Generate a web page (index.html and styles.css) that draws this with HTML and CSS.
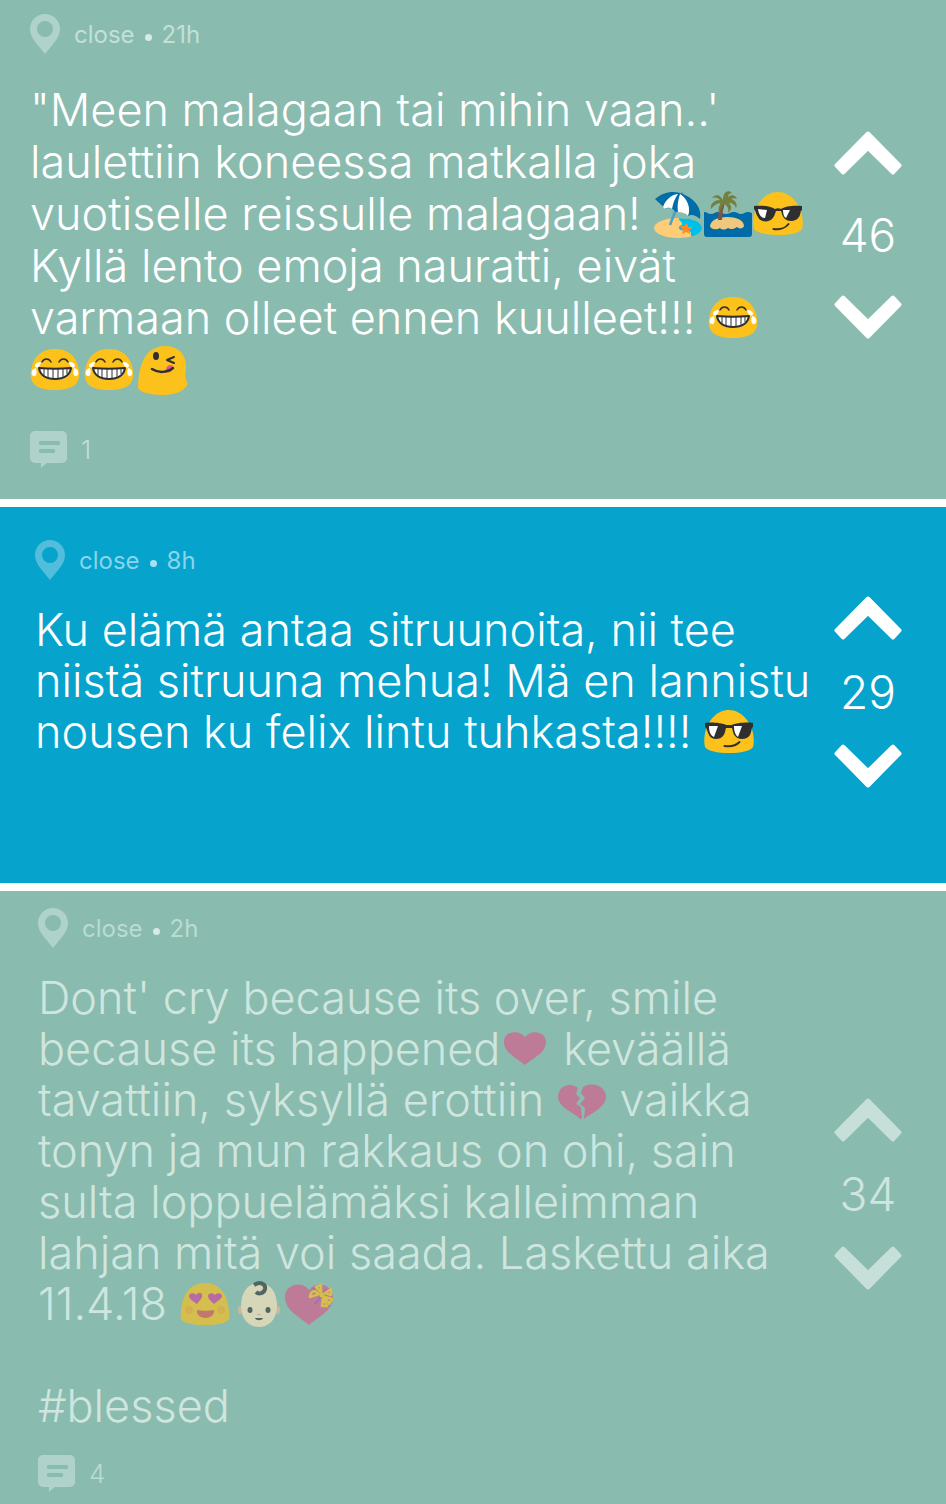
FILE: index.html
```html
<!DOCTYPE html>
<html lang="fi">
<head>
<meta charset="utf-8">
<meta name="viewport" content="width=device-width, initial-scale=1">
<title>Posts</title>
<link rel="stylesheet" href="styles.css">
</head>
<body>
<svg class="sprite" aria-hidden="true">
  <symbol id="pin" viewBox="0 0 30 40"><path fill-rule="evenodd" d="M15 0C6.700 0 0 6.700 0 15c0 9 8 16 15 25 7-9 15-16 15-25C30 6.700 23.300 0 15 0zm0 7a8 8 0 1 1 0 16 8 8 0 0 1 0-16z"/></symbol>
  <symbol id="comment" viewBox="0 0 37 37"><path fill-rule="evenodd" d="M5 0h27a5 5 0 0 1 5 5v22a5 5 0 0 1-5 5H17l-6 5v-5H5a5 5 0 0 1-5-5V5a5 5 0 0 1 5-5zm7 10a2 2 0 0 0-2 4h17a2 2 0 0 0 2-4zm0 8a2 2 0 0 0-2 4h12a2 2 0 0 0 2-4z"/></symbol>
  <symbol id="up" viewBox="0 0 68 44"><path stroke-width="4" stroke-linejoin="round" d="M34 2.500 2.500 34.500 9 41.500 34 17 59 41.500 65.500 34.500z"/></symbol>
  <symbol id="down" viewBox="0 0 68 44"><path stroke-width="4" stroke-linejoin="round" d="M34 41.500 2.500 9.500 9 2.500 34 27 59 2.500 65.500 9.500z"/></symbol>

  <symbol id="beach" viewBox="0 0 50 50">
    <ellipse cx="25" cy="38" rx="24" ry="10" fill="#fc7"/>
    <path fill="#00bfe8" d="M26 28.300c13-.5 23 4 23 9.700 0 4-5 7-10 8.300-3-1.300 1-3.300-3-5.300s-9 1-10-3c-.6-3 4-2 3-5-1-2-4-2.700-3-4.700z"/>
    <path stroke="#4f9fc3" stroke-width="2.500" d="M29.500 2.500 17 35"/>
    <path fill="#006da8" d="M2 9C11 1 23 0 32 5c11 5 17 14 15 24-5-4-8-5-12-3-4-4-8-5-12-4-4-4-7-5-11-3C9 15 6 13 2 9z"/>
    <path fill="#fff" d="M25 4C17 5 12 11 10 17l2 2c3-2 5-1 7 0 1-6 3-11 6-15zM27 4c-2 6-3 12-2 18 4 0 7 1 10 4 3-7 0-17-8-22z"/>
    <path fill="#ff8b20" d="m34 33 1 4 5 0-4 3 1 4-4-2-4 2 1-4-3-4 4 0z"/>
  </symbol>
  <symbol id="island" viewBox="0 0 50 50">
    <path fill="#006ba6" d="M1 22c3 0 4 2 7 2s4-2 7-2 5 2 8 2 5-2 8-2 4 2 7 2 4-2 7-2 2 1 4 1v21a3 3 0 0 1-3 3H4a3 3 0 0 1-3-3z"/>
    <path fill="#f0c87b" d="M7 36c1-6 8-9 17-9s17 3 17 9c-1 3-5 3-7 1-3 2-6 3-9 1-3 2-6 2-8 0-3 2-9 2-10-2z"/>
    <path fill="none" stroke="#7d5547" stroke-width="4" d="M20 12c-2 6-3 12-3 18"/>
    <path fill="#74803e" d="M20 10C17 4 12 4 9 8c4-1 6 0 8 2-6 0-10 4-9 9 3-4 6-6 10-6-3 4-3 8-1 10 0-4 2-7 4-9 4 2 5 5 4 9 4-3 4-7 1-10 4 0 6 2 7 5 2-4-1-8-5-9 2-1 4-1 6 0-1-4-6-5-9-2 0-3 2-4 4-4-4-4-9-1-9 7z"/>
  </symbol>
  <symbol id="cool" viewBox="0 0 50 50">
    <path fill="#fcc21b" d="M25 2C37 2 46 13 49 25c1 6 1 11 0 14-3 4-12 6-24 6S4 43 1 39c-1-4-1-9 0-14C4 12 13 2 25 2z"/>
    <path fill="#2f2f2f" d="M1 16c7-1 17 0 21 3 2-1 4-1 6 0 4-3 14-4 21-3v4c-2 1-1 4-3 7-3 5-12 5-15 1-2-2-2-5-3-7h-5c-1 3-2 6-4 8-4 4-12 3-14-2-2-2-2-6-4-8z"/>
    <path fill="#fff" d="m5 19 9 1-2 8c-4 0-6-3-7-9zM30 20l7 0-4 8c-2-1-3-4-3-8z"/>
    <path fill="none" stroke="#2f2f2f" stroke-width="2" stroke-linecap="round" d="M20.500 39c6 1 12-1 15-5"/>
  </symbol>
  <symbol id="cool-wide" viewBox="0 0 50 50">
    <path fill="#fcc21b" d="M25 2C37 2 46 13 49 25c1 6 1 11 0 14-3 4-12 6-24 6S4 43 1 39c-1-4-1-9 0-14C4 12 13 2 25 2z"/>
    <path fill="#2f2f2f" d="M1 15c7-1 17 0 21 2h6c4-2 14-3 21-2v4c-2 1-1 4-3 8-3 5-12 5-15 1-2-2-2-5-3-8h-6c-1 3-1 6-3 8-3 4-12 4-14-1-2-4-2-7-4-8z"/>
    <path fill="#fff" d="M5 18h9l-4 11c-4-2-5-6-5-11zM30 18h8l-4 11c-3-2-4-7-4-11z"/>
    <path fill="none" stroke="#2f2f2f" stroke-width="2" stroke-linecap="round" d="M20.500 38c6 1 12-1 15-4"/>
  </symbol>
  <symbol id="joy" viewBox="0 0 50 50">
    <path fill="#fcc21b" d="M25 3c12 0 20 6 23 17 2 7 2 13-2 18-4 4-12 6-21 6S8 42 4 38C0 33 0 27 2 20 5 9 13 3 25 3z"/>
    <path fill="none" stroke="#2f2f2f" stroke-width="1.500" stroke-linecap="round" d="M12 16c2-4 7-4 9 0M29 16c2-4 7-4 9 0"/>
    <path fill="#fff" stroke="#2f2f2f" stroke-width="2" stroke-linejoin="round" d="M9 22c10 1 22 1 32 0-1 7-7 11-16 11S10 29 9 22z"/>
    <path stroke="#2f2f2f" d="M14 23v6M18 23v9M23 23v10M28 23v10M33 23v8M37 23v5"/>
    <path fill="#fff" d="M11 16C8 16 5 17 5 20c1 3 5 2 6-4zM6 22c-4 1-5 4-4 7 3 3 6 0 4-7zM39 16c3 0 6 1 6 4-1 3-5 2-6-4zM44 22c4 1 5 4 4 7-3 3-6 0-4-7z"/>
  </symbol>
  <symbol id="yum" viewBox="0 0 50 50">
    <path fill="#fcc21b" d="M0 42C0 28 3 16 9 8c4-5 11-8 18-8 13 0 21 8 21 20 0 7-2 10 1 16 1 3-1 5-2 6-4 4-11 7-22 7C12 49 2 46 0 42z"/>
    <ellipse cx="18" cy="10" rx="3" ry="4" fill="#2f2f2f"/>
    <path fill="none" stroke="#2f2f2f" stroke-width="2" stroke-linecap="round" stroke-linejoin="round" d="m36 11-7 3 7 3"/>
    <path fill="#e0558b" d="M28 23c1-5 7-5 7-2 0 4-3 6-6 5z"/>
    <path fill="none" stroke="#2f2f2f" stroke-width="2.500" stroke-linecap="round" d="M14 23c6 4 15 4 21-1"/>
  </symbol>
  <symbol id="heart" viewBox="0 0 50 50"><path fill="#d95a8b" d="M25 40C17 33 4 28 4 17 4 6 19 4 25 12 31 4 46 6 46 17c0 11-13 16-21 23z"/></symbol>
  <symbol id="broken" viewBox="0 0 50 50">
    <path fill="#d95a8b" d="M21 12C14 6 2 9 1 20c0 12 16 16 22 23l2-1-1-11-5-3 4-6-4-4zM26 11C33 6 48 8 49 20c0 11-14 17-22 23l1-11-5-4 5-6-4-5z"/>
  </symbol>
  <symbol id="love" viewBox="0 0 50 50">
    <path fill="#fcc21b" d="M25 3C37 3 46 11 48 25c1 6 2 11 1 14-2 4-12 6-24 6S3 43 1 39c-1-3 0-8 1-14C4 11 13 3 25 3z"/>
    <path fill="#d0409f" d="M17 24c-4-3-8-5-8-8s5-4 7-1c3-4 7-2 6 1 0 3-3 5-5 8zM34 24c-3-3-6-5-6-8s5-4 7-1c2-3 7-2 7 1 0 3-5 5-8 8z"/>
    <circle cx="9" cy="30" r="4" fill="#f79329" opacity=".5"/><circle cx="41" cy="30" r="4" fill="#f79329" opacity=".5"/>
    <path fill="#e0554b" d="M17 30c5 1 12 1 17 0 1 4-3 8-8 8s-10-3-9-8z"/>
  </symbol>
  <symbol id="baby" viewBox="0 0 50 50">
    <ellipse cx="6" cy="30" rx="2" ry="4" fill="#f0b891"/><ellipse cx="44" cy="30" rx="2" ry="4" fill="#f0b891"/>
    <path fill="#ffe5bd" d="M25 3c11 0 18 9 18 23 0 13-8 21-18 21S7 39 7 26C7 12 14 3 25 3z"/>
    <path fill="none" stroke="#343a3b" stroke-width="4" d="M20 5c6-4 12-1 11 4-1 4-6 6-9 3"/>
    <ellipse cx="16" cy="30" rx="2.500" ry="3" fill="#343a3b"/><ellipse cx="34" cy="30" rx="2.500" ry="3" fill="#343a3b"/>
    <path fill="#343a3b" d="M21 38h8c-1 3-7 3-8 0z"/><path fill="none" stroke="#e0a482" d="M23 34c1 1 3 1 4 0"/>
  </symbol>
  <symbol id="gift" viewBox="0 0 50 50">
    <path fill="#d95a8b" d="M25 45C16 37 1 31 1 17 1 4 18 0 25 10 32 0 49 4 49 17c0 14-15 20-24 28z"/>
    <path fill="none" stroke="#a84bad" stroke-width="2" d="m29 8 17 17M43 9 31 24"/>
    <g fill="none" stroke="#fcc21b" stroke-width="2.500" stroke-linejoin="round">
      <path d="m35 14-9 3c0-3 2-6 5-6zM37 12l-5-5 5-2zM41 13l6-4 0 6zM41 17l7 2-3 5zM39 18l4 8-5 0z"/>
    </g>
    <circle cx="38" cy="15" r="2.500" fill="#fcc21b"/>
  </symbol>
</svg>

<main class="feed">
  <article class="post post-first">
    <div class="post-body">
      <header class="meta"><svg class="pin"><use href="#pin"/></svg><span>close</span><i class="dot"></i><span>21h</span></header>
      <p class="message">"Meen malagaan tai mihin vaan..'<br>laulettiin koneessa matkalla joka<br>vuotiselle reissulle malagaan! <svg class="emoji"><use href="#beach"/></svg><svg class="emoji"><use href="#island"/></svg><svg class="emoji"><use href="#cool"/></svg><br>Kyllä lento emoja nauratti, eivät<br>varmaan olleet ennen kuulleet!!! <svg class="emoji"><use href="#joy"/></svg><br><svg class="emoji spaced"><use href="#joy"/></svg><svg class="emoji spaced"><use href="#joy"/></svg><svg class="emoji"><use href="#yum"/></svg></p>
      <footer class="replies"><svg class="comment"><use href="#comment"/></svg><span>1</span></footer>
    </div>
    <div class="votes">
      <button class="vote" type="button" aria-label="Upvote"><svg><use href="#up"/></svg></button>
      <span class="score">46</span>
      <button class="vote" type="button" aria-label="Downvote"><svg><use href="#down"/></svg></button>
    </div>
  </article>

  <article class="post post-blue">
    <div class="post-body">
      <header class="meta"><svg class="pin"><use href="#pin"/></svg><span>close</span><i class="dot"></i><span>8h</span></header>
      <p class="message">Ku elämä antaa sitruunoita, nii tee<br>niistä sitruuna mehua! Mä en lannistu<br>nousen ku felix lintu tuhkasta!!!! <svg class="emoji"><use href="#cool-wide"/></svg></p>
    </div>
    <div class="votes">
      <button class="vote" type="button" aria-label="Upvote"><svg><use href="#up"/></svg></button>
      <span class="score">29</span>
      <button class="vote" type="button" aria-label="Downvote"><svg><use href="#down"/></svg></button>
    </div>
  </article>

  <article class="post post-faded">
    <div class="post-body">
      <header class="meta"><svg class="pin"><use href="#pin"/></svg><span>close</span><i class="dot"></i><span>2h</span></header>
      <p class="message">Dont' cry because its over, smile<br>because its happened<svg class="emoji"><use href="#heart"/></svg> keväällä<br>tavattiin, syksyllä erottiin <svg class="emoji"><use href="#broken"/></svg> vaikka<br>tonyn ja mun rakkaus on ohi, sain<br>sulta loppuelämäksi kalleimman<br>lahjan mitä voi saada. Laskettu aika<br>11.4.18 <svg class="emoji spaced"><use href="#love"/></svg><svg class="emoji"><use href="#baby"/></svg><svg class="emoji"><use href="#gift"/></svg><br><br>#blessed</p>
      <footer class="replies"><svg class="comment"><use href="#comment"/></svg><span>4</span></footer>
    </div>
    <div class="votes">
      <button class="vote" type="button" aria-label="Upvote"><svg><use href="#up"/></svg></button>
      <span class="score">34</span>
      <button class="vote" type="button" aria-label="Downvote"><svg><use href="#down"/></svg></button>
    </div>
  </article>
</main>
</body>
</html>
```

FILE: styles.css
```css
* { box-sizing: border-box; }
body { margin: 0; background: #fff; font-family: Inter, "Open Sans", sans-serif; font-weight: 300; }
.sprite { position: absolute; width: 0; height: 0; }
.feed { display: grid; gap: 8px; }

.post {
  --text: #fff;
  --muted: #c3e0d8;
  --icon: #afd2ca;
  --arrow: #fff;
  display: flex;
  justify-content: space-between;
  background: #8abbaf;
  color: var(--text);
  padding-right: 44px;
}
.post-body { display: flex; flex-direction: column; gap: 24px; min-width: 0; }
.post-first .post-body { padding: 14px 0 31px 30px; gap: 30px; }
.post-blue { --muted: #86d5ec; --icon: #52bedb; background: #06a3cd; }
.post-blue .post-body { padding: 33px 0 126px 35px; }
.post-faded { --text: #cfe6df; --muted: #b9dcd3; --arrow: #c6dfd8; }
.post-faded .post-body { padding: 17px 0 12px 38px; }

.meta { display: flex; align-items: center; height: 40px; color: var(--muted); font-size: 24px; font-weight: 400; }
.pin { width: 30px; height: 40px; margin-right: 14px; fill: var(--icon); }
.dot { width: 7px; height: 7px; margin: 6px 10px 0; border-radius: 50%; background: #d5ebe5; }
.post-blue .dot { background: #a9e1f3; }

.message { margin: 0; font-size: 45px; line-height: 51px; white-space: nowrap; }
.post-first .message { line-height: 52px; margin-bottom: 5px; }
.emoji { width: 50px; height: 50px; vertical-align: middle; margin: -13px 0 -7px; }
.emoji.spaced { margin-right: 4px; }
.post-faded .emoji { opacity: 0.65; }

.replies { display: flex; align-items: center; gap: 14px; color: var(--muted); font-size: 26px; line-height: 37px; }
.comment { width: 37px; height: 37px; fill: var(--icon); }

.votes { display: flex; flex-direction: column; align-items: center; justify-content: center; gap: 28px; padding-bottom: 7px; }
.post-first .votes { gap: 36px; padding-bottom: 29px; }
.vote { display: block; padding: 0; border: 0; background: none; cursor: pointer; }
.vote svg { display: block; width: 68px; height: 44px; fill: var(--arrow); stroke: var(--arrow); }
.score { font-size: 46px; line-height: 48px; }
```
